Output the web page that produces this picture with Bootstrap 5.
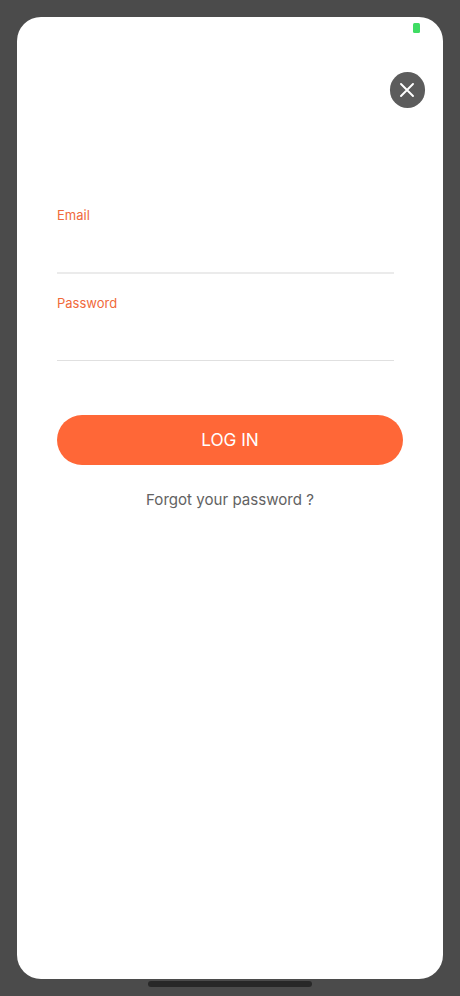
<!DOCTYPE html>
<html lang="en">
<head>
<meta charset="utf-8">
<meta name="viewport" content="width=device-width, initial-scale=1">
<title>Log in</title>
<link href="https://cdn.jsdelivr.net/npm/bootstrap@5.3.0/dist/css/bootstrap.min.css" rel="stylesheet">
<style>
body{background:#4b4b4b;font-family:Inter,"Liberation Sans",sans-serif;height:996px;overflow:hidden}
.sheet{margin:17px 17px 0;height:962px;border-radius:24px;background:#fff}
.top-row{height:183px;padding:6px 18px 0 0}
.battery{width:7px;height:9.5px;border-radius:1.5px;background:#3fdc63;margin-right:5px}
.close-btn{width:35.5px;height:35.5px;background:#5c5c5c!important;margin-top:39.5px}
.login-form{padding:0 40px}
.field{height:88px;padding-top:5px}
.field label{display:block;font-size:13px;line-height:20px;color:#f0693a;letter-spacing:0}
.field input{height:48px;width:337px;border:0;border-bottom:1px solid #e0e0e0;border-radius:0;padding:0;box-shadow:none!important}
.field:first-child input{height:49px;border-bottom:2px solid #ebebeb}
.login-btn{height:50px;margin-top:38.6px;padding-top:1px!important;background:#ff6737!important;font-size:17.2px;line-height:24px}
.forgot{color:#626262;font-size:15.1px;line-height:20px;margin-top:25.4px}
.home-bar{width:164px;height:6px;border-radius:3px;background:#282828;margin-top:2px}
</style>
<script src="https://cdn.jsdelivr.net/npm/bootstrap@5.3.0/dist/js/bootstrap.bundle.min.js"></script>
</head>
<body>
<main class="sheet">
<div class="top-row d-flex flex-column align-items-end">
<div class="battery"></div>
<button type="button" class="close-btn btn rounded-circle border-0 p-0 d-flex align-items-center justify-content-center" aria-label="Close">
<svg width="14" height="14" viewBox="0 0 14 14" fill="none" stroke="#fff" stroke-width="1.9" stroke-linecap="round"><path d="M1 1l12 12M13 1L1 13"/></svg>
</button>
</div>
<form class="login-form">
<div class="field"><label for="email">Email</label><input class="form-control" id="email" type="email"></div>
<div class="field"><label for="pw">Password</label><input class="form-control" id="pw" type="password"></div>
<button type="button" class="login-btn btn rounded-pill w-100 border-0 px-0 pb-0 text-white">LOG IN</button>
<a href="#" class="forgot d-block text-center text-decoration-none">Forgot your password ?</a>
</form>
</main>
<div class="home-bar mx-auto"></div>
</body>
</html>
